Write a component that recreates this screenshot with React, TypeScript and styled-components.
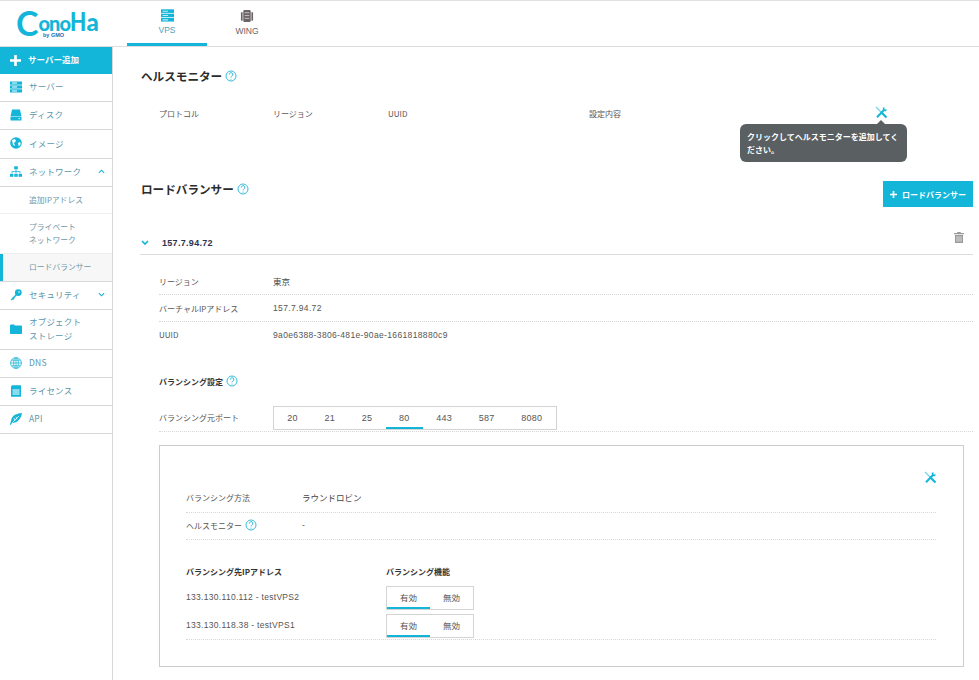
import React from "react";
import styled, { createGlobalStyle } from "styled-components";

const CY = "#13b5d8";
const Global = createGlobalStyle`
  html, body { margin: 0; padding: 0; background: #fff; }
  body { font-family: "Noto Sans CJK JP", "Liberation Sans", sans-serif; color: #444; font-size: 8px; overflow: hidden; }
  * { box-sizing: border-box; }
`;
const Page = styled.div`width: 979px; height: 680px; display: flex; flex-direction: column; overflow: hidden; border-top: 1px solid #e2e2e2;`;
const Top = styled.header`height: 46px; flex: none; display: flex; border-bottom: 1px solid #ddd;`;
const LogoBox = styled.div`width: 127px; flex: none; padding: 0 0 0 16px; position: relative; display: flex; align-items: flex-end; font-family: "Lato", sans-serif; font-weight: 900; color: ${CY}; line-height: 1;`;
const LogoC = styled.span`font-size: 34px; font-weight: 700; margin-bottom: 6px;`;
const LogoSmall = styled.span`font-size: 20px; letter-spacing: -1px; margin-bottom: 13px;`;
const LogoH = styled.span`font-size: 27px; margin-bottom: 12px; display: inline-block; transform: scaleX(0.78); transform-origin: left; margin-right: -4.4px;`;
const LogoA = styled.span`font-size: 24px; margin-bottom: 12px;`;
const By = styled.span`position: absolute; left: 43px; top: 31px; font-family: "Liberation Sans", sans-serif; font-size: 5.5px; font-weight: 700; color: #1a6fb0; line-height: 6px;`;
const TopTab = styled.div<{ $on?: boolean }>`
  width: 80px; height: 45px; display: flex; flex-direction: column; align-items: center; padding-top: 8px;
  border-bottom: 3px solid ${p => (p.$on ? CY : "transparent")};
  font-family: "Liberation Sans", sans-serif; font-size: 8.5px; color: ${p => (p.$on ? "#4f9fbb" : "#6a5f66")};
  svg { margin-bottom: 3px; }
`;
const Body = styled.div`flex: 1; display: flex; min-height: 0;`;
const Side = styled.nav`width: 113px; flex: none; border-right: 1px solid #d8d8d8;`;
const AddBtn = styled.div`height: 27px; background: ${CY}; color: #fff; font-weight: 700; font-size: 8.5px; display: flex; align-items: center; padding: 0 0 3px 10px; gap: 7px; svg { margin-top: 3px; }`;
const Item = styled.div<{ $h?: number }>`
  height: ${p => p.$h ?? 28}px; border-bottom: 1px solid #d8d8d8; display: flex; align-items: center; padding: 0 7px 2px 10px; gap: 7px;
  color: #5d97ad; font-size: 8.5px; line-height: 14px; letter-spacing: 0.2px;
`;
const ItemLabel = styled.span`flex: 1; padding-bottom: 1px;`;
const Sub = styled.div<{ $h?: number; $on?: boolean }>`
  height: ${p => p.$h ?? 27}px; display: flex; align-items: center; padding-left: 29px; color: #6f97a8; font-size: 7.8px; line-height: 12.5px;
  border-bottom: 1px solid ${p => (p.$on ? "#d8d8d8" : "#f0f0f0")};
  background: ${p => (p.$on ? "#f7f7f7" : "#fff")};
  box-shadow: ${p => (p.$on ? `inset 3px 0 0 ${CY}` : "none")};
`;
const Main = styled.main`flex: 1; padding: 0 6px 0 28px; min-width: 0;`;
const Head = styled.h2<{ $top: number }>`
  margin: ${p => p.$top}px 0 0; height: 18px; display: flex; align-items: center; gap: 3px; font-size: 11.6px; font-weight: 700; color: #2c2c2c;
`;
const Cols = styled.div`height: 20px; margin-top: 18px; padding-left: 18px; display: grid; grid-template-columns: 114px 115px 201px 1fr; align-items: center; position: relative; color: #555;`;
const ToolSpot = styled.span`position: absolute; left: 734px; top: 3px; display: flex;`;
const Tip = styled.div`
  position: absolute; left: 599px; top: 21px; width: 167px; height: 38px; background: #5a6062; color: #fff; border-radius: 6px;
  font-size: 8px; font-weight: 700; line-height: 13px; padding: 6px 7px; z-index: 2;
  &::before { content: ""; position: absolute; top: -4px; left: 137px; border: 4px solid transparent; border-top: 0; border-bottom-color: #5a6062; }
`;
const LbHead = styled.div`display: flex; justify-content: space-between; align-items: flex-start; margin-top: 58px; height: 34px;`;
const LbTitle = styled(Head)`margin: -1px 0 0;`;
const AddLb = styled.div`width: 90px; height: 26px; background: ${CY}; color: #fff; font-weight: 700; font-size: 8px; display: flex; align-items: center; justify-content: center; gap: 5px;`;
const Acc = styled.div`height: 24px; margin: 16px 0 0 -1px; border-bottom: 1px solid #ddd; display: flex; align-items: center; padding: 0 9px 0 0; font-weight: 700; font-size: 9px; color: #2b3350;`;
const AccIp = styled.span`flex: 1; margin-left: 12px; font-family: "Liberation Sans", sans-serif; letter-spacing: 0.3px;`;
const TrashSpot = styled.span`display: flex; margin-bottom: 10px;`;
const Details = styled.div`padding-left: 18px; margin-top: 13px;`;
const Row = styled.div<{ $h?: number; $plain?: boolean; $w?: number; $pb?: number }>`
  height: ${p => p.$h ?? 27}px; display: grid; grid-template-columns: ${p => p.$w ?? 114}px 1fr; align-items: center; color: #555; font-size: 8px;
  padding-bottom: ${p => p.$pb ?? 0}px;
  border-bottom: ${p => (p.$plain ? "none" : "1px dotted #d6d6d6")};
`;
const Val = styled.span`font-family: "Liberation Sans", sans-serif; font-size: 8.5px; color: #555; letter-spacing: 0.35px;`;
const ValJa = styled.span`font-size: 8.5px; color: #444;`;
const InlineLabel = styled.span`display: flex; align-items: center; gap: 3px;`;
const Bold = styled.div`font-weight: 700; font-size: 8px; color: #333; display: flex; align-items: center; gap: 3px;`;
const Setting = styled(Bold)`height: 18px; margin-top: 25px;`;
const PortRow = styled(Row)`margin-top: 15px;`;
const PortBox = styled.div`width: 284px; height: 24px; border: 1px solid #d4d4d4; align-self: start; margin-top: 1px; display: flex;`;
const Seg = styled.div<{ $on?: boolean }>`
  display: flex; align-items: center; justify-content: center; padding: 1px 13.3px 0; font-family: "Liberation Sans", sans-serif; font-size: 9px; letter-spacing: 0.3px; color: #555;
  border-bottom: 2px solid ${p => (p.$on ? CY : "transparent")};
`;
const Panel = styled.section`margin-top: 13px; height: 222px; width: 805px; border: 1px solid #ccc; padding: 40px 27px 0 26px; position: relative;`;
const PanelTool = styled.span`position: absolute; right: 26px; top: 25px; display: flex;`;
const Cols2 = styled.div`display: grid; grid-template-columns: 200px 1fr; margin-top: 24px; height: 14px; align-items: center;`;
const DestRows = styled.div`margin-top: 8px; border-bottom: 1px dotted #d6d6d6; display: flex; flex-direction: column; gap: 4px; padding-bottom: 1px;`;
const Dest = styled.div`height: 24px; display: grid; grid-template-columns: 200px 88px; align-items: center; font-family: "Liberation Sans", sans-serif; font-size: 8.5px; letter-spacing: 0.3px; color: #555;`;
const DestName = styled.span`padding-bottom: 2px;`;
const Toggle = styled.div`width: 88px; height: 24px; border: 1px solid #d4d4d4; display: grid; grid-template-columns: 43px 1fr;`;
const ToggleSeg = styled.div<{ $on?: boolean }>`
  display: flex; align-items: center; justify-content: center; font-family: "Noto Sans CJK JP", sans-serif; font-size: 8.5px; letter-spacing: 0; color: #555;
  border-bottom: 2px solid ${p => (p.$on ? CY : "transparent")};
`;

const Help = () => (
  <svg width="12" height="12" viewBox="0 0 12 12" fill="none">
    <circle cx="6" cy="6" r="5" stroke="#35bcd9" strokeWidth="1" />
    <path d="M4.3 4.6a1.8 1.8 0 1 1 2.6 1.5c-.6.3-.9.6-.9 1.3" stroke="#35bcd9" strokeWidth="1" />
    <circle cx="6" cy="9" r=".6" fill="#35bcd9" />
  </svg>
);
const Tools = () => (
  <svg width="13" height="13" viewBox="0 0 13 13" fill="none" stroke={CY}>
    <path d="M1 1l5 5" strokeWidth="1.1" stroke="#6fd2e8" />
    <path d="M6 6l5.5 5.5" strokeWidth="2.2" />
    <path d="M2 11.2L9 4" strokeWidth="2" />
    <path d="M8.6 1.8a2 2 0 0 0 2.6 2.6" strokeWidth="1.4" />
    <path d="M8.6 4.4L9 1.4M8.6 4.4l3-.6" strokeWidth="1" />
  </svg>
);
const Ico = ({ children }: { children: React.ReactNode }) => (
  <svg width="12" height="12" viewBox="0 0 12 12" fill={CY} stroke="none" style={{ flex: "none" }}>{children}</svg>
);
const ServerIc = () => (
  <Ico><rect x="0" y="0.5" width="12" height="3.2" /><rect x="0" y="4.4" width="12" height="3.2" /><rect x="0" y="8.3" width="12" height="3.2" /><path d="M2 1.6h5v1H2zM2 5.5h5v1H2zM2 9.4h5v1H2z" fill="#fff" /></Ico>
);
const DiskIc = () => (<Ico><path d="M2 0.5h8l1.5 7H.5z" /><rect x="0.5" y="8" width="11" height="3.5" rx=".5" /><rect x="8.5" y="9.2" width="1.5" height="1" fill="#fff" /></Ico>);
const GlobeIc = () => (<Ico><circle cx="6" cy="6" r="5.8" /><path d="M2 3l3-1 1 2-2 2 1 3-2-1zM8 6l2-1 .8 2-2 2.6z" fill="#fff" /></Ico>);
const NetIc = () => (<Ico><rect x="4.2" y="0.3" width="3.6" height="3" /><path d="M5.6 3.3h.8v2h4v2h-.8V6H6.4v1.3h-.8V6H2.4v1.3h-.8v-2h4z" /><rect x="0" y="7.8" width="3.4" height="3" /><rect x="4.3" y="7.8" width="3.4" height="3" /><rect x="8.6" y="7.8" width="3.4" height="3" /></Ico>);
const KeyIc = () => (<Ico><circle cx="8.3" cy="3.6" r="3.4" /><path d="M6 5L.8 10.5l.9 1L3 10.3l.6.5 1-1-.5-.6L7 6z" /><circle cx="9" cy="3" r=".8" fill="#fff" /></Ico>);
const FolderIc = () => (<Ico><path d="M0 2.5a1 1 0 0 1 1-1h3l1 1h6a1 1 0 0 1 1 1V10a1 1 0 0 1-1 1H1a1 1 0 0 1-1-1z" /></Ico>);
const DnsIc = () => (
  <svg width="12" height="12" viewBox="0 0 12 12" fill="none" stroke="#35bcd9" strokeWidth=".9" style={{ flex: "none" }}>
    <circle cx="6" cy="6" r="5.4" /><ellipse cx="6" cy="6" rx="2.4" ry="5.4" /><path d="M.6 6h10.8M1.4 3.2h9.2M1.4 8.8h9.2M6 .6v10.8" />
  </svg>
);
const LicIc = () => (<Ico><path d="M2 0.3h9v11.4H1V1.5z" /><path d="M2.5 4.5h7v1h-7zM2.5 6.5h7v1h-7zM2.5 8.5h7v1h-7z" fill="#fff" /></Ico>);
const ApiIc = () => (<Ico><path d="M12 0C7 .5 2 2 1.2 7.2L0 11.5l1 .5 1.2-2.5C7 10.5 11 6 12 0z" /><path d="M3 9l6-6M4 5l1 3M6 3.8l1 2.7" stroke="#fff" strokeWidth=".7" fill="none" /></Ico>);
const Chev = ({ up, w = 7, sw = 1.3 }: { up?: boolean; w?: number; sw?: number }) => (
  <svg width={w} height="5" viewBox="0 0 8 5" fill="none" stroke={CY} strokeWidth={sw} style={{ flex: "none" }}>
    <path d={up ? "M1 4l3-3 3 3" : "M1 1l3 3 3-3"} />
  </svg>
);
const Plus = ({ s }: { s: number }) => (
  <svg width={s} height={s} viewBox="0 0 10 10" fill="#fff" style={{ flex: "none" }}><path d="M3.8 0h2.4v3.8H10v2.4H6.2V10H3.8V6.2H0V3.8h3.8z" /></svg>
);
const Trash = () => (
  <svg width="10" height="11" viewBox="0 0 10 11" fill="#999"><path d="M3.5 0h3l.5 1h3v1.2H0V1h3z" /><path d="M1 3h8v8H1z" /><path d="M3 4.2v5.6M5 4.2v5.6M7 4.2v5.6" stroke="#fff" strokeWidth=".7" /></svg>
);
const WingIc = () => (
  <svg width="16" height="14" viewBox="0 0 16 15" fill="#6d6468"><path d="M5 1h6l1 1v11l-1 1H5l-1-1V2z" /><rect x="1.5" y="3.5" width="1.8" height="9" /><rect x="12.7" y="3.5" width="1.8" height="9" /><path d="M5.5 4h5M5.5 7h5M5.5 10h5" stroke="#ddd" strokeWidth=".8" /></svg>
);
const VpsIc = () => (
  <svg width="13" height="13" viewBox="0 0 12 12" fill={CY}><rect y="0.3" width="12" height="3.3" /><rect y="4.3" width="12" height="3.3" /><rect y="8.3" width="12" height="3.3" /><path d="M1.5 1.5h5v1h-5zM1.5 5.5h5v1h-5zM1.5 9.5h5v1h-5z" fill="#bfeaf4" /></svg>
);

const ports = ["20", "21", "25", "80", "443", "587", "8080"];

export default function App() {
  return (
    <Page>
      <Global />
      <Top>
        <LogoBox>
          <LogoC>C</LogoC><LogoSmall>ono</LogoSmall><LogoH>H</LogoH><LogoA>a</LogoA>
          <By>by GMO</By>
        </LogoBox>
        <TopTab $on><VpsIc />VPS</TopTab>
        <TopTab><WingIc />WING</TopTab>
      </Top>
      <Body>
        <Side>
          <AddBtn><Plus s={11} />サーバー追加</AddBtn>
          <Item><ServerIc /><ItemLabel>サーバー</ItemLabel></Item>
          <Item><DiskIc /><ItemLabel>ディスク</ItemLabel></Item>
          <Item $h={29}><GlobeIc /><ItemLabel>イメージ</ItemLabel></Item>
          <Item><NetIc /><ItemLabel>ネットワーク</ItemLabel><Chev up /></Item>
          <Sub>追加IPアドレス</Sub>
          <Sub $h={40}><span>プライベート<br />ネットワーク</span></Sub>
          <Sub $h={28} $on>ロードバランサー</Sub>
          <Item><KeyIc /><ItemLabel>セキュリティ</ItemLabel><Chev /></Item>
          <Item $h={40}><FolderIc /><ItemLabel>オブジェクト<br />ストレージ</ItemLabel></Item>
          <Item><DnsIc /><ItemLabel>DNS</ItemLabel></Item>
          <Item><LicIc /><ItemLabel>ライセンス</ItemLabel></Item>
          <Item><ApiIc /><ItemLabel>API</ItemLabel></Item>
        </Side>
        <Main>
          <Head $top={20}>ヘルスモニター<Help /></Head>
          <Cols>
            <span>プロトコル</span><span>リージョン</span><span>UUID</span><span>設定内容</span>
            <ToolSpot><Tools /></ToolSpot>
            <Tip>クリックしてヘルスモニターを追加してください。</Tip>
          </Cols>
          <LbHead>
            <LbTitle $top={0}>ロードバランサー<Help /></LbTitle>
            <AddLb><Plus s={7} />ロードバランサー</AddLb>
          </LbHead>
          <Acc><Chev w={10} sw={1.7} /><AccIp>157.7.94.72</AccIp><TrashSpot><Trash /></TrashSpot></Acc>
          <Details>
            <Row>リージョン<ValJa>東京</ValJa></Row>
            <Row>バーチャルIPアドレス<Val>157.7.94.72</Val></Row>
            <Row $plain $h={25}>UUID<Val>9a0e6388-3806-481e-90ae-1661818880c9</Val></Row>
            <Setting>バランシング設定<Help /></Setting>
            <PortRow $pb={6}>バランシング元ポート
              <PortBox>{ports.map(p => <Seg key={p} $on={p === "80"}>{p}</Seg>)}</PortBox>
            </PortRow>
            <Panel>
              <PanelTool><Tools /></PanelTool>
              <Row $w={116} $pb={4}>バランシング方法<ValJa>ラウンドロビン</ValJa></Row>
              <Row $w={116} $pb={2}><InlineLabel>ヘルスモニター<Help /></InlineLabel><Val>-</Val></Row>
              <Cols2><Bold>バランシング先IPアドレス</Bold><Bold>バランシング機能</Bold></Cols2>
              <DestRows>
                <Dest><DestName>133.130.110.112 - testVPS2</DestName><Toggle><ToggleSeg $on>有効</ToggleSeg><ToggleSeg>無効</ToggleSeg></Toggle></Dest>
                <Dest><DestName>133.130.118.38 - testVPS1</DestName><Toggle><ToggleSeg $on>有効</ToggleSeg><ToggleSeg>無効</ToggleSeg></Toggle></Dest>
              </DestRows>
            </Panel>
          </Details>
        </Main>
      </Body>
    </Page>
  );
}
